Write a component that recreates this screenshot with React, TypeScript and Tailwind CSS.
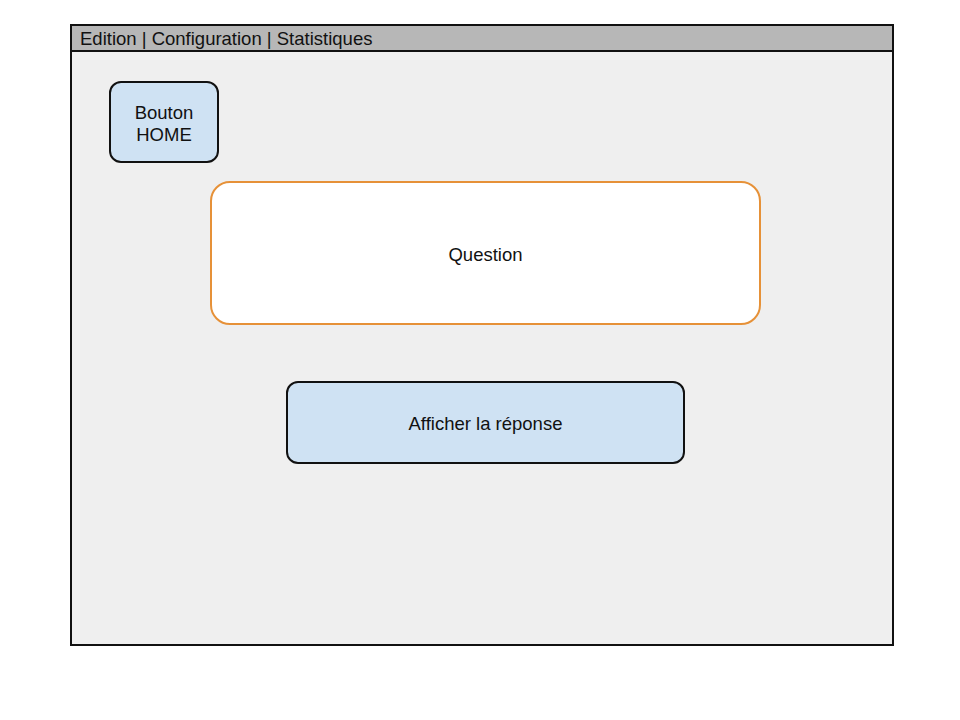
export default function App() {
  return (
    <div className="w-[960px] h-[720px] bg-white pt-[24px] pl-[70px]" style={{ fontFamily: '"Liberation Sans", Arial, sans-serif' }}>
      <div className="w-[824px] h-[622px] border-2 border-[#111] bg-[#efefef] flex flex-col">
        <div className="h-[26px] bg-[#b7b7b7] border-b-2 border-[#111] flex items-center pl-[8px] pt-[2px] text-[18.5px] text-[#111] leading-none">
          Edition | Configuration | Statistiques
        </div>
        <div className="flex flex-col">
          <button className="mt-[29px] ml-[37px] w-[110px] h-[82px] pt-[3px] rounded-[12px] border-2 border-[#111] bg-[#cfe2f3] text-[18.5px] leading-[22px] text-[#111] flex items-center justify-center text-center">
            Bouton<br />HOME
          </button>
          <div className="mt-[18px] ml-[138px] w-[551px] h-[144px] pt-[3px] rounded-[20px] border-2 border-[#e69138] bg-white flex items-center justify-center text-[18.5px] text-[#111]">
            Question
          </div>
          <button className="mt-[56px] ml-[214px] w-[399px] h-[83px] pt-[3px] rounded-[12px] border-2 border-[#111] bg-[#cfe2f3] flex items-center justify-center text-[18.5px] text-[#111]">
            Afficher la réponse
          </button>
        </div>
      </div>
    </div>
  );
}
